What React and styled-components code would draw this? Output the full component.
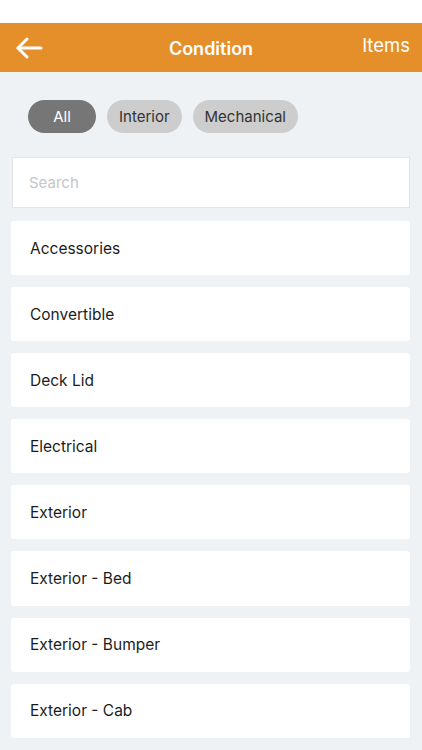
import React from "react";
import styled, { createGlobalStyle } from "styled-components";

const GlobalStyle = createGlobalStyle`
  html, body {
    margin: 0;
    padding: 0;
    background: #eff2f5;
    font-family: Inter, "Liberation Sans", Arial, sans-serif;
  }
  * { box-sizing: border-box; }
`;

const Page = styled.div`
  width: 422px;
  min-height: 750px;
  background: #eff2f5;
`;

const StatusBar = styled.div`
  height: 23px;
  background: #ffffff;
`;

const Header = styled.header`
  height: 49px;
  background: #e58f2b;
  display: grid;
  grid-template-columns: 80px 1fr 80px;
  align-items: center;
  color: #ffffff;
`;

const BackButton = styled.button`
  border: none;
  background: transparent;
  padding: 0 0 0 15px;
  display: flex;
  align-items: center;
  height: 100%;
  cursor: pointer;
`;

const Title = styled.h1`
  margin: 0;
  text-align: center;
  font-size: 18px;
  font-weight: 600;
  padding-top: 2px;
`;

const HeaderAction = styled.span`
  text-align: right;
  padding-right: 12px;
  font-size: 18.5px;
  font-weight: 400;
  margin-top: -5px;
`;

const Chips = styled.div`
  display: flex;
  gap: 11px;
  padding: 28px 0 0 28px;
`;

const Chip = styled.button`
  height: 33px;
  border: none;
  border-radius: 17px;
  padding: 0 12px;
  min-width: ${p => (p.$wide ? "68px" : "auto")};
  font-family: inherit;
  font-size: 15px;
  background: ${p => (p.$active ? "#767676" : "#cdcdcd")};
  color: ${p => (p.$active ? "#ffffff" : "#333333")};
`;

const SearchBox = styled.input`
  display: block;
  margin: 24px 12px 0 12px;
  width: 398px;
  height: 51px;
  border: 1px solid #e2e4e7;
  background: #ffffff;
  padding: 0 16px;
  font-family: inherit;
  font-size: 15px;
  outline: none;
  &::placeholder {
    color: #c4c6c8;
  }
`;

const List = styled.ul`
  list-style: none;
  margin: 13px 0 0 0;
  padding: 0 12px 0 11px;
  display: flex;
  flex-direction: column;
  gap: 12px;
`;

const Row = styled.li`
  height: 54.1px;
  background: #ffffff;
  border-radius: 3px;
  display: flex;
  align-items: center;
  padding-left: 19px;
  font-size: 15.5px;
  color: #1c1c1c;
`;

const items = [
  "Accessories",
  "Convertible",
  "Deck Lid",
  "Electrical",
  "Exterior",
  "Exterior - Bed",
  "Exterior - Bumper",
  "Exterior - Cab",
];

const ArrowLeft = () => (
  <svg width="28" height="24" viewBox="0 0 28 24" fill="none" stroke="#fff" strokeWidth="3" strokeLinecap="round" strokeLinejoin="round">
    <path d="M26 12H3" />
    <path d="M12 3L3 12l9 9" />
  </svg>
);

export default function App() {
  return (
    <Page>
      <GlobalStyle />
      <StatusBar />
      <Header>
        <BackButton aria-label="Back">
          <ArrowLeft />
        </BackButton>
        <Title>Condition</Title>
        <HeaderAction>Items</HeaderAction>
      </Header>
      <Chips>
        <Chip $active $wide>All</Chip>
        <Chip>Interior</Chip>
        <Chip>Mechanical</Chip>
      </Chips>
      <SearchBox placeholder="Search" />
      <List>
        {items.map(item => (
          <Row key={item}>{item}</Row>
        ))}
      </List>
    </Page>
  );
}
